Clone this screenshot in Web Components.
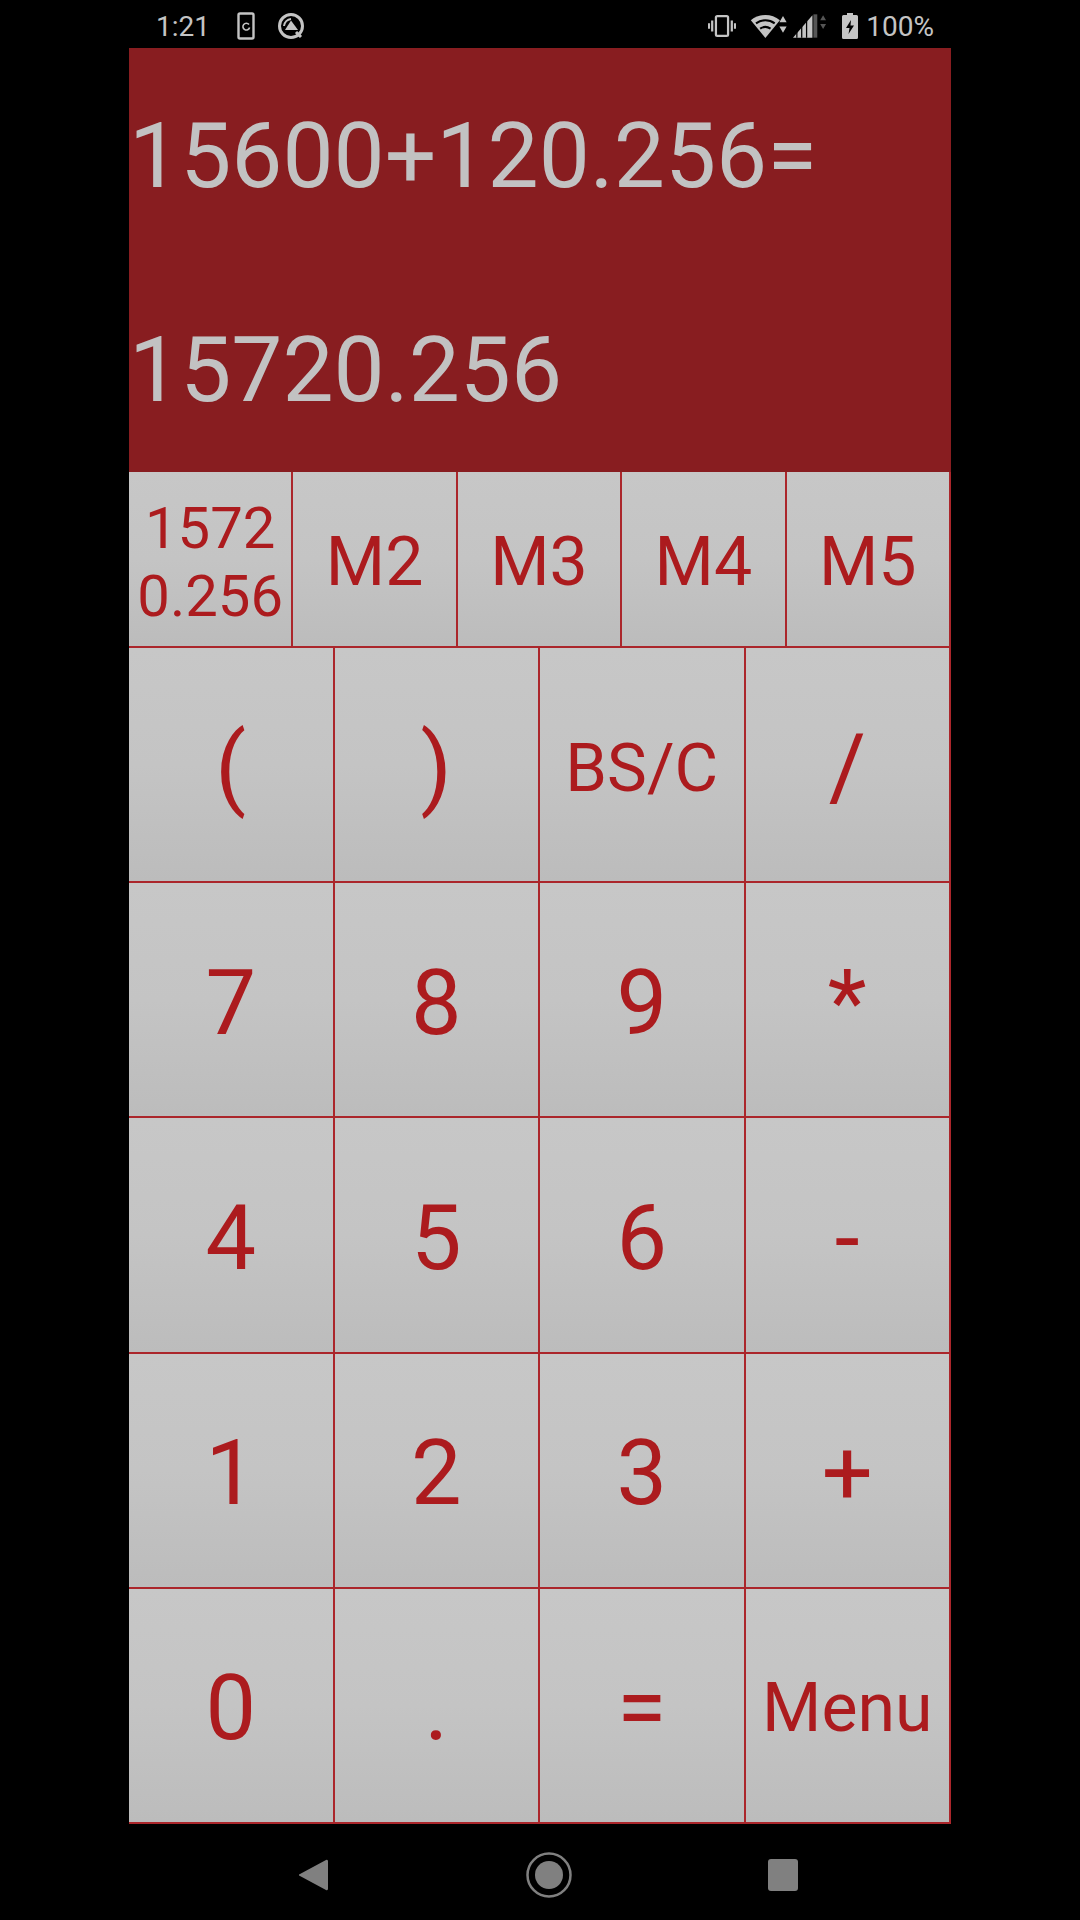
<!DOCTYPE html>
<html>
<head>
<meta charset="utf-8">
<style>
  html, body { margin: 0; padding: 0; background: #000; }
  body { width: 1080px; height: 1920px; font-family: Roboto, "Liberation Sans", sans-serif; display: flex; flex-direction: column; overflow: hidden; }
  calc-pad { flex: 1; }
</style>
</head>
<body>
<status-bar></status-bar>
<calc-display>
  <span slot="expr">15600+120.256=</span>
  <span slot="result">15720.256</span>
</calc-display>
<memory-row>
  <calc-key size="58" wrap>15720.256</calc-key>
  <calc-key size="68">M2</calc-key>
  <calc-key size="68">M3</calc-key>
  <calc-key size="68">M4</calc-key>
  <calc-key size="68">M5</calc-key>
</memory-row>
<calc-pad>
  <calc-key size="90">(</calc-key>
  <calc-key size="90">)</calc-key>
  <calc-key size="67">BS/C</calc-key>
  <calc-key size="90">/</calc-key>
  <calc-key size="90">7</calc-key>
  <calc-key size="90">8</calc-key>
  <calc-key size="90">9</calc-key>
  <calc-key size="90">*</calc-key>
  <calc-key size="90">4</calc-key>
  <calc-key size="90">5</calc-key>
  <calc-key size="90">6</calc-key>
  <calc-key size="90">-</calc-key>
  <calc-key size="90">1</calc-key>
  <calc-key size="90">2</calc-key>
  <calc-key size="90">3</calc-key>
  <calc-key size="90">+</calc-key>
  <calc-key size="90">0</calc-key>
  <calc-key size="90">.</calc-key>
  <calc-key size="90">=</calc-key>
  <calc-key size="68">Menu</calc-key>
</calc-pad>
<nav-bar></nav-bar>

<script>
class StatusBar extends HTMLElement {
  connectedCallback() {
    this.attachShadow({ mode: 'open' });
    this.shadowRoot.innerHTML = `
      <style>
        :host { display: flex; align-items: center; box-sizing: border-box; height: 48px; padding: 4px 146px 0 156px; color: #c4c4c4; font-size: 28px; }
        svg { display: block; fill: none; stroke: #c4c4c4; }
        .time { width: 81px; }
        .left { display: flex; align-items: center; gap: 21px; }
        .right { margin-left: auto; display: flex; align-items: center; }
      </style>
      <span class="time">1:21</span>
      <div class="left">
        <svg width="18" height="28" viewBox="0 0 18 28" stroke-width="2.4">
          <rect x="1.5" y="1.5" width="15" height="25" rx="1.5"/>
          <path d="M12 12.5a3.4 3.4 0 1 0 .6 3" stroke-width="1.6"/>
        </svg>
        <svg width="30" height="28" viewBox="0 0 30 28" stroke-width="3">
          <circle cx="15" cy="14" r="11.5"/>
          <path d="M15 8.5 L22 18 H9 Z" fill="#c4c4c4" stroke="none"/>
          <path d="M8 14 A8 8 0 0 1 15 7" stroke-width="2"/>
          <path d="M20 20 L25 25" stroke-width="3"/>
        </svg>
      </div>
      <div class="right">
        <svg width="28" height="24" viewBox="0 0 30 24" stroke-width="2.4">
          <rect x="8.5" y="1.5" width="13" height="21" rx="1.5"/>
          <path d="M4.5 6v12M1 9v6M25.500 6v12M29 9v6"/>
        </svg>
        <svg style="margin-left:13px" width="41" height="27" viewBox="0 0 36 26">
          <path d="M14 24 L0 7 A22 22 0 0 1 28 7 Z" fill="#c4c4c4" stroke="none"/>
          <path d="M5 10 A15 15 0 0 1 23 10 M9 15 A9 9 0 0 1 19 15" stroke="#000" stroke-width="2"/>
          <path d="M31 3l3.500 6h-7zM31 19l3.500-6h-7z" fill="#c4c4c4" stroke="none"/>
        </svg>
        <svg style="margin-left:2px" width="35" height="28" viewBox="0 0 36 28">
          <path d="M1 26 L21 3 V26 Z" fill="#c4c4c4" stroke="none"/>
          <path d="M22 2h4v24h-4z" fill="#555" stroke="none"/>
          <path d="M5 26V18M10 26V13M15 26V8" stroke="#000" stroke-width="1.3"/>
          <path d="M32 3l3 5h-6zM32 17l3-5h-6z" fill="#555" stroke="none"/>
        </svg>
        <svg style="margin-left:15px" width="16" height="26" viewBox="0 0 16 26">
          <path d="M5 0h6v2h3.500a1.500 1.500 0 0 1 1.500 1.500V24.500a1.500 1.500 0 0 1-1.500 1.500H1.500A1.500 1.500 0 0 1 0 24.500V3.500A1.500 1.500 0 0 1 1.500 2H5z" fill="#c4c4c4" stroke="none"/>
          <path d="M9 7L4 15h3.500L6.500 21L12 12.500H8.500z" fill="#000" stroke="none"/>
        </svg>
        <span style="margin-left:8px">100%</span>
      </div>
    `;
  }
}

class CalcDisplay extends HTMLElement {
  connectedCallback() {
    this.attachShadow({ mode: 'open' });
    this.shadowRoot.innerHTML = `
      <style>
        :host { display: flex; flex-direction: column; justify-content: space-between; height: 424px; margin: 0 129px; box-sizing: border-box; padding: 55px 0 48px 0; background: #881d20; color: #c2c2c2; font-size: 91px; line-height: 107px; }
      </style>
      <slot name="expr"></slot>
      <slot name="result"></slot>
    `;
  }
}

class MemoryRow extends HTMLElement {
  connectedCallback() {
    this.attachShadow({ mode: 'open' });
    this.shadowRoot.innerHTML = `
      <style>
        :host { display: grid; grid-template-columns: repeat(5, 1fr); height: 176px; margin: 0 129px; }
      </style>
      <slot></slot>
    `;
  }
}

class CalcPad extends HTMLElement {
  connectedCallback() {
    this.attachShadow({ mode: 'open' });
    this.shadowRoot.innerHTML = `
      <style>
        :host { display: grid; grid-template-columns: repeat(4, 1fr); grid-template-rows: repeat(5, 1fr); margin: 0 129px; }
      </style>
      <slot></slot>
    `;
  }
}

class CalcKey extends HTMLElement {
  connectedCallback() {
    const size = this.getAttribute('size') || 90;
    const wrap = this.hasAttribute('wrap');
    this.attachShadow({ mode: 'open' });
    this.shadowRoot.innerHTML = `
      <style>
        :host { display: flex; align-items: center; justify-content: center; box-sizing: border-box; min-width: 0; text-align: center; color: #ac1b1e;
          border-right: 2px solid #ab262b; border-bottom: 2px solid #ab262b;
          background: linear-gradient(180deg, #c7c7c7 0%, #c4c4c4 50%, #bcbcbc 100%);
          font-size: ${size}px; line-height: ${wrap ? '68px' : '1.17'}; padding: ${wrap ? 5 : 7}px 8px 0; }
        span { ${wrap ? 'word-break: break-all;' : ''} }
      </style>
      <span><slot></slot></span>
    `;
  }
}

class NavBar extends HTMLElement {
  connectedCallback() {
    this.attachShadow({ mode: 'open' });
    this.shadowRoot.innerHTML = `
      <style>
        :host { display: flex; align-items: center; box-sizing: border-box; height: 96px; padding: 6px 0 0 298px; }
        svg { display: block; fill: #808080; }
      </style>
      <svg width="30" height="34" viewBox="0 0 30 34"><path d="M28 2 A1.500 1.500 0 0 1 30 3 V31 A1.500 1.500 0 0 1 28 32 L2 18 A1 1 0 0 1 2 16 Z"/></svg>
      <svg style="margin-left:198px" width="46" height="46" viewBox="0 0 46 46"><circle cx="23" cy="23" r="21.500" fill="none" stroke="#808080" stroke-width="2.500"/><circle cx="23" cy="23" r="14"/></svg>
      <svg style="margin-left:196px" width="30" height="32" viewBox="0 0 30 32"><rect width="30" height="32" rx="3"/></svg>
    `;
  }
}

customElements.define('status-bar', StatusBar);
customElements.define('calc-display', CalcDisplay);
customElements.define('memory-row', MemoryRow);
customElements.define('calc-pad', CalcPad);
customElements.define('calc-key', CalcKey);
customElements.define('nav-bar', NavBar);
</script>
</body>
</html>
